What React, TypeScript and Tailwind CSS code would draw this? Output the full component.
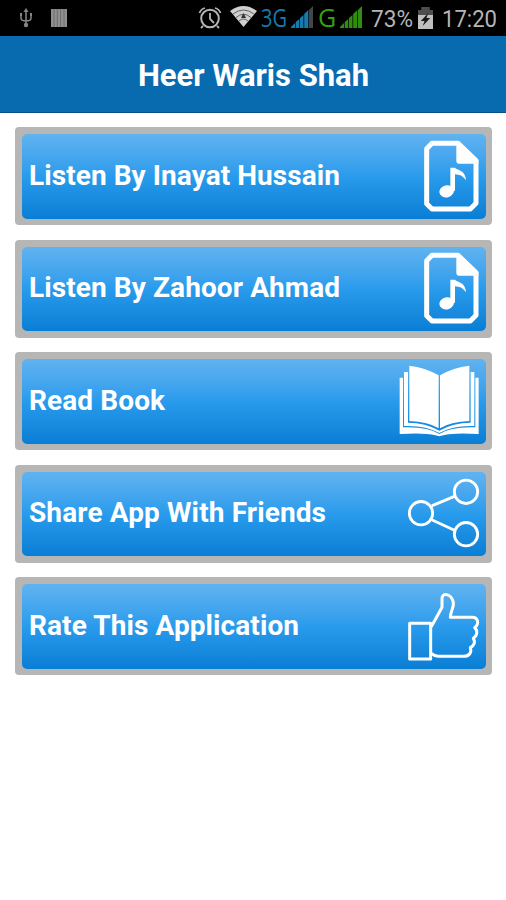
import React from "react";
import { clsx } from "clsx";

type MenuItem = {
  label: string;
  icon: React.ReactNode;
  width: string;
};

const MusicFileIcon = () => (
  <svg className="h-[72px] w-[82px]" viewBox="24 60 246 216" fill="none">
    <path
      d="M126 70H204L258 122V250L241 267H126L110 251V86Z"
      stroke="white"
      strokeWidth="15"
      strokeLinejoin="round"
    />
    <path d="M199 66H209L265 120V131H207Q199 131 199 122Z" fill="white" />
    <ellipse cx="170" cy="214" rx="22" ry="18" fill="white" transform="rotate(-15 170 214)" />
    <path d="M181 143H195C202 151 227 150 228 181C219 167 208 164 195 163V212H181Z" fill="white" />
  </svg>
);

const BookIcon = () => (
  <svg className="h-[72px] w-[82px]" viewBox="24 60 246 216">
    <g fill="white">
      <path d="M58 62Q105 67 146 91V250Q115 230 58 228Z" />
      <path d="M238 62Q190 67 150 91V250Q181 230 238 228Z" />
      <path d="M42 81H54V233Q107 233 148 257Q190 233 242 233V81H253V243Q190 240 148 264Q105 240 42 243Z" />
      <path d="M29 98H39V247Q112 244 148 267Q184 244 256 247V98H266V267Q190 262 160 271Q148 276 136 271Q105 262 29 267Z" />
    </g>
  </svg>
);

const ShareIcon = () => (
  <svg className="h-[72px] w-[82px]" viewBox="24 52.5 246 216" fill="none">
    <g stroke="white" strokeWidth="8.5">
      <circle cx="93" cy="161" r="35" />
      <circle cx="228" cy="97" r="35" />
      <circle cx="228" cy="224" r="35" />
      <path d="M125 139L195 110M125 181L195 213" />
    </g>
  </svg>
);

const ThumbIcon = () => (
  <svg className="h-[72px] w-[82px]" viewBox="24 60 246 216" fill="none">
    <g stroke="white" strokeWidth="9" strokeLinejoin="round" strokeLinecap="round">
      <path d="M59 160H122V267H59Z" />
      <path d="M125 168C134 152 147 128 156 112V86C155 68 183 68 190 97C193 113 181 124 181 142H247C265 142 268 163 254 173C264 182 262 197 250 205C257 216 253 226 241 233C246 247 238 259 221 259H144Q133 258 125 251" />
    </g>
  </svg>
);

const items: MenuItem[] = [
  { label: "Listen By Inayat Hussain", icon: <MusicFileIcon />, width: "311" },
  { label: "Listen By Zahoor Ahmad", icon: <MusicFileIcon />, width: "311" },
  { label: "Read Book", icon: <BookIcon />, width: "136" },
  { label: "Share App With Friends", icon: <ShareIcon />, width: "297" },
  { label: "Rate This Application", icon: <ThumbIcon />, width: "270" },
];

const SignalIcon = ({ className, lastBar }: { className: string; lastBar: string }) => (
  <svg className={clsx("h-[23px] w-[23px] shrink-0", className)} viewBox="0 0 23 23" fill="currentColor">
    <path d="M0 22V21L4 17V22ZM4.7 16L8.3 13V22H4.7ZM9 12L12.5 9V22H9ZM13.2 8L17.3 4V22H13.2Z" />
    <path d="M18 4L22 0V22H18Z" className={lastBar} />
  </svg>
);

const StatusBar = () => (
  <div className="flex h-9 items-center bg-black text-[#b5b5b5]">
    <svg className="ml-[19px] h-[20px] w-[14px]" viewBox="0 0 14 20" fill="none" stroke="#858585" strokeWidth="1.5">
      <path d="M7 17V3M2 7V10Q2 13 7 13Q12 13 12 10V7" />
      <path d="M7 0L9.5 4H4.5ZM1 5H3V8H1ZM11 5H13V8H11Z" fill="#858585" stroke="none" />
      <circle cx="7" cy="17" r="2.2" fill="#858585" stroke="none" />
    </svg>
    <svg className="ml-[18px] h-[18px] w-4" viewBox="0 0 16 18">
      <path d="M0 0H16V18H0Z" fill="#909090" />
      <path d="M3 0V18M6.3 0V18M9.6 0V18M13 0V18" stroke="#6c6c6c" />
    </svg>
    <svg className="mb-[2px] ml-[131px] h-[23px] w-[24px]" viewBox="0 0 24 23" fill="none" stroke="currentColor">
      <circle cx="12" cy="12.5" r="8.8" strokeWidth="2" />
      <path d="M12 7V13L16 17M1.5 7Q3 3 7 2M22.5 7Q21 3 17 2M5 20L3 22M19 20L21 22" strokeWidth="1.8" />
    </svg>
    <svg className="mb-[3px] ml-[8px] h-[21px] w-[27px]" viewBox="0 0 27 21">
      <path d="M0 5Q13.5-5 27 5L13.5 21Z" fill="#d0d0d0" />
      <path d="M3 8Q13.5 0 24 8M6 11.5Q13.5 5 21 11.5M9 15Q13.5 11 18 15" fill="none" stroke="#555" strokeWidth="0.9" />
      <path d="M13.5 7L16 12H11Z" fill="#333" />
    </svg>
    <svg className="ml-[4px] h-[36px] w-[27px] overflow-visible" viewBox="0 0 27 36">
      <text x="0" y="27" textLength="26" lengthAdjust="spacingAndGlyphs" className="fill-[#1678ad] font-['Open_Sans',sans-serif] text-[26px]">
        3G
      </text>
    </svg>
    <SignalIcon className="mb-[2px] ml-[3px] text-[#187bb0]" lastBar="fill-[#454545]" />
    <svg className="ml-[3px] h-[36px] w-[20px] overflow-visible" viewBox="0 0 20 36">
      <text x="1" y="27" className="fill-[#36a30d] font-['Open_Sans',sans-serif] text-[25px]">
        G
      </text>
    </svg>
    <SignalIcon className="mb-[2px] ml-[3px] text-[#2e8f0e]" lastBar="fill-[#2e8f0e]" />
    <svg className="ml-[8px] h-[36px] w-[42px] overflow-visible" viewBox="0 0 42 36">
      <text x="0" y="27" textLength="42" lengthAdjust="spacingAndGlyphs" className="fill-[#b5b5b5] font-[Roboto,sans-serif] text-[24px]">
        73%
      </text>
    </svg>
    <svg className="ml-[5px] h-[22px] w-[15px]" viewBox="0 0 16 22" preserveAspectRatio="none">
      <path d="M0 4Q0 3 1 3H4V0H12V3H15Q16 3 16 4V22H0Z" fill="#bfbfbf" />
      <path d="M4 0H12V3H16V8H0V3H4Z" fill="#4e4e4e" />
      <path d="M11 6L3 14H7L5 19L13 11H9Z" fill="#181818" />
    </svg>
    <svg className="ml-[9px] h-[36px] w-[55px] overflow-visible" viewBox="0 0 55 36">
      <text x="0" y="27" textLength="55" lengthAdjust="spacingAndGlyphs" className="fill-[#b5b5b5] font-[Roboto,sans-serif] text-[24px]">
        17:20
      </text>
    </svg>
  </div>
);

const MenuCard: React.FC<MenuItem> = ({ label, icon, width }) => (
  <button className="h-[98px] w-full rounded-[4px] bg-[#b6b6b6] px-[6.5px] pt-[7px] pb-[6.5px] text-left">
    <div className="flex h-full items-center justify-between rounded-[5px] bg-linear-to-b from-[#60b3f0] via-[#289bec] to-[#087ed5] pr-[5.5px] pb-[1.5px] pl-[7.5px]">
      <svg className="h-[40px] w-[320px] overflow-visible" viewBox="0 0 320 40">
        <text x="0" y="29" textLength={width} className="fill-white font-[Roboto,sans-serif] text-[28px] font-bold">
          {label}
        </text>
      </svg>
      <div className="-ml-20 shrink-0">{icon}</div>
    </div>
  </button>
);

const App: React.FC = () => {
  return (
    <div className="min-h-screen bg-white">
      <StatusBar />
      <header className="flex h-[77px] items-center justify-center border-b border-[#075186] bg-[#086bb0]">
        <svg className="h-[40px] w-[231px] overflow-visible" viewBox="0 0 231 40">
          <text x="0" y="32" textLength="231" className="fill-white font-[Roboto,sans-serif] text-[31px] font-bold">
            Heer Waris Shah
          </text>
        </svg>
      </header>
      <main className="flex flex-col gap-[14.5px] pt-[14px] pr-[14px] pl-[15px]">
        {items.map((item) => (
          <MenuCard key={item.label} {...item} />
        ))}
      </main>
    </div>
  );
};

export default App;
